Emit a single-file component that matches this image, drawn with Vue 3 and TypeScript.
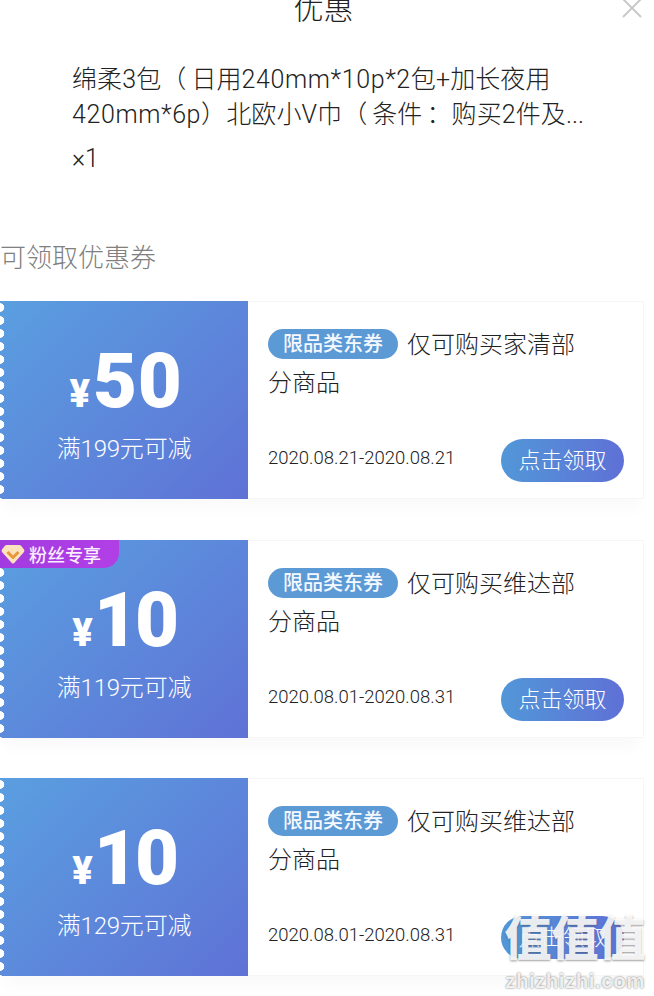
<script setup lang="ts">
interface Coupon {
  amount: string
  rule: string
  goods: string
  date: string
  fans: boolean
}
const coupons: Coupon[] = [
  { amount: '50', rule: '满199元可减', goods: '仅可购买家清部分商品', date: '2020.08.21-2020.08.21', fans: false },
  { amount: '10', rule: '满119元可减', goods: '仅可购买维达部分商品', date: '2020.08.01-2020.08.31', fans: true },
  { amount: '10', rule: '满129元可减', goods: '仅可购买维达部分商品', date: '2020.08.01-2020.08.31', fans: false },
]
</script>

<template>
  <div class="page">
    <h1 class="title">优惠</h1>
    <svg class="close" width="24" height="24" viewBox="0 0 24 24" aria-hidden="true">
      <path d="M3 2 L21 20 M21 2 L3 20" stroke="#c9c9c9" stroke-width="2" fill="none" />
    </svg>
    <div class="product">
      <p class="name">绵柔3包<span class="open">（</span>日用<span class="latin">240mm*10p*2</span>包+加长夜用<span class="latin">420mm*6p</span><span class="shut">）</span>北欧小V巾<span class="open">（</span>条件<span class="colon">：</span>购买2件及...</p>
      <p class="qty">×1</p>
    </div>
    <h2 class="section">可领取优惠券</h2>
    <div class="list">
      <div v-for="(c, i) in coupons" :key="i" class="coupon">
        <div class="left">
          <div v-if="c.fans" class="fans">
            <svg width="24" height="22" viewBox="0 0 24 22" aria-hidden="true">
              <path d="M6 2 H18 Q19.5 2 20.5 3.2 L23 6.5 Q24 8 22.8 9.3 L13.2 20 Q12 21.2 10.8 20 L1.2 9.3 Q0 8 1 6.5 L3.5 3.2 Q4.5 2 6 2 Z" fill="#fde3bb" />
              <path d="M6.5 9 L12 14.5 L17.5 9" stroke="#e8973f" stroke-width="3" fill="none" stroke-linejoin="round" />
            </svg>
            <span>粉丝专享</span>
          </div>
          <div class="price">
            <span class="yen">¥</span><span class="amount">{{ c.amount }}</span>
          </div>
          <div class="rule">{{ c.rule }}</div>
        </div>
        <div class="right">
          <div class="desc"><span class="tag">限品类东券</span>{{ c.goods }}</div>
          <div class="foot">
            <span class="date">{{ c.date }}</span>
            <button class="get" type="button">点击领取</button>
          </div>
        </div>
      </div>
    </div>
    <div class="mark">
      <div class="mark-zh">值值值</div>
      <div class="mark-en">zhizhizhi.com</div>
    </div>
  </div>
</template>

<style>
html, body { margin: 0; background: #fff; overflow: hidden; }
</style>

<style scoped>
.page {
  position: relative;
  width: 654px;
  height: 996px;
  overflow: hidden;
  background: #fff;
  font-family: Roboto, "Noto Sans CJK SC", sans-serif;
  color: #333;
  text-spacing-trim: space-all;
}
.title {
  margin: -12px 0 0;
  height: 41px;
  line-height: 41px;
  text-align: center;
  font-size: 30px;
  font-weight: 300;
  color: #222;
  padding-right: 7px;
}
.close {
  position: absolute;
  top: -3px;
  right: 10px;
}
.product {
  padding: 33px 0 0 72px;
  width: 530px;
}
.name {
  margin: 0;
  font-size: 25px;
  line-height: 35px;
  color: #222;
  font-weight: 300;
  letter-spacing: 0.1px;
}
.latin { letter-spacing: 0.6px; }
.open { padding-right: 5px; }
.colon { padding-left: 4px; }
.qty {
  margin: 10px 0 0;
  font-size: 25px;
  line-height: 34px;
  font-weight: 300;
  color: #222;
}
.section {
  margin: 65px 0 0;
  font-size: 26px;
  line-height: 34px;
  font-weight: 300;
  color: #808080;
}
.list {
  margin-top: 26px;
  display: flex;
  flex-direction: column;
  gap: 40px;
  width: 644px;
}
.coupon {
  display: flex;
  height: 198px;
  box-shadow: 0 14px 14px -4px rgba(0, 0, 0, 0.025);
}
.coupon:first-child { margin-bottom: 1px; }
.left {
  position: relative;
  flex: none;
  width: 248px;
  box-sizing: border-box;
  background: linear-gradient(135deg, #5a9fe0 0%, #5f72d6 100%);
  color: #fff;
  display: flex;
  flex-direction: column;
  align-items: center;
}
.left::before {
  content: "";
  position: absolute;
  left: -1px;
  top: 0;
  bottom: 0;
  width: 6px;
  background: radial-gradient(circle at 1px 6.5px, #fff 4px, transparent 4.6px) 0 0 / 6px 13px repeat-y;
}
.fans {
  position: absolute;
  z-index: 1;
  left: 0;
  top: 0;
  width: 119px;
  height: 28px;
  box-sizing: border-box;
  padding-left: 1px;
  display: flex;
  align-items: center;
  gap: 4px;
  background: linear-gradient(90deg, #a13be0, #b23fe6);
  border-bottom-right-radius: 15px;
  font-size: 18px;
  font-weight: 500;
  color: #fbeeff;
}
.price {
  margin-top: 38px;
  height: 84px;
  display: flex;
  align-items: baseline;
  justify-content: center;
  padding-left: 4px;
}
.amount {
  font-size: 76px;
  line-height: 84px;
  font-weight: 900;
  font-family: Roboto, sans-serif;
  font-variant-numeric: proportional-nums;
}
.yen {
  font-size: 38px;
  font-weight: 900;
  margin-right: 3px;
  font-family: Roboto, "Noto Sans CJK SC", sans-serif;
}
.rule {
  margin-top: 10px;
  font-size: 24px;
  line-height: 32px;
  font-weight: 300;
  letter-spacing: -0.2px;
}
.right {
  flex: 1;
  box-sizing: border-box;
  padding: 24px 19px 16px 20px;
  border: 1px solid #f6f6f6;
  border-left: 0;
  display: flex;
  flex-direction: column;
  justify-content: space-between;
}
.desc {
  width: 320px;
  font-size: 24px;
  line-height: 38px;
  font-weight: 300;
  color: #222;
}
.tag {
  display: inline-block;
  height: 30px;
  line-height: 30px;
  width: 130px;
  margin-right: 9px;
  text-align: center;
  border-radius: 15px;
  background: #5c9ad6;
  color: #f4f8ff;
  font-size: 20px;
  font-weight: 500;
  vertical-align: 2px;
}
.foot {
  display: flex;
  align-items: center;
  justify-content: space-between;
}
.date {
  font-size: 18.5px;
  font-weight: 300;
  color: #222;
  padding-bottom: 5px;
}
.get {
  width: 123px;
  height: 43px;
  padding: 0;
  border: 0;
  border-radius: 22px;
  background: linear-gradient(90deg, #5297d8, #5f70d6);
  color: #fff;
  font: 300 22px/43px Roboto, "Noto Sans CJK SC", sans-serif;
}
.mark {
  position: absolute;
  left: 501px;
  top: 909px;
  width: 148px;
  text-align: center;
  color: rgba(255, 255, 255, 0.9);
  text-shadow: 0 1px 2px rgba(80, 80, 80, 0.6);
}
.mark-zh {
  font-size: 47px;
  line-height: 60px;
  font-weight: 900;
  white-space: nowrap;
}
.mark-en {
  font-family: "Liberation Sans", sans-serif;
  font-size: 20.5px;
  line-height: 22px;
  letter-spacing: 0.5px;
  font-weight: 700;
  margin-top: 1px;
  text-shadow: 0 0 2px rgba(60, 60, 60, 0.8);
}
</style>
